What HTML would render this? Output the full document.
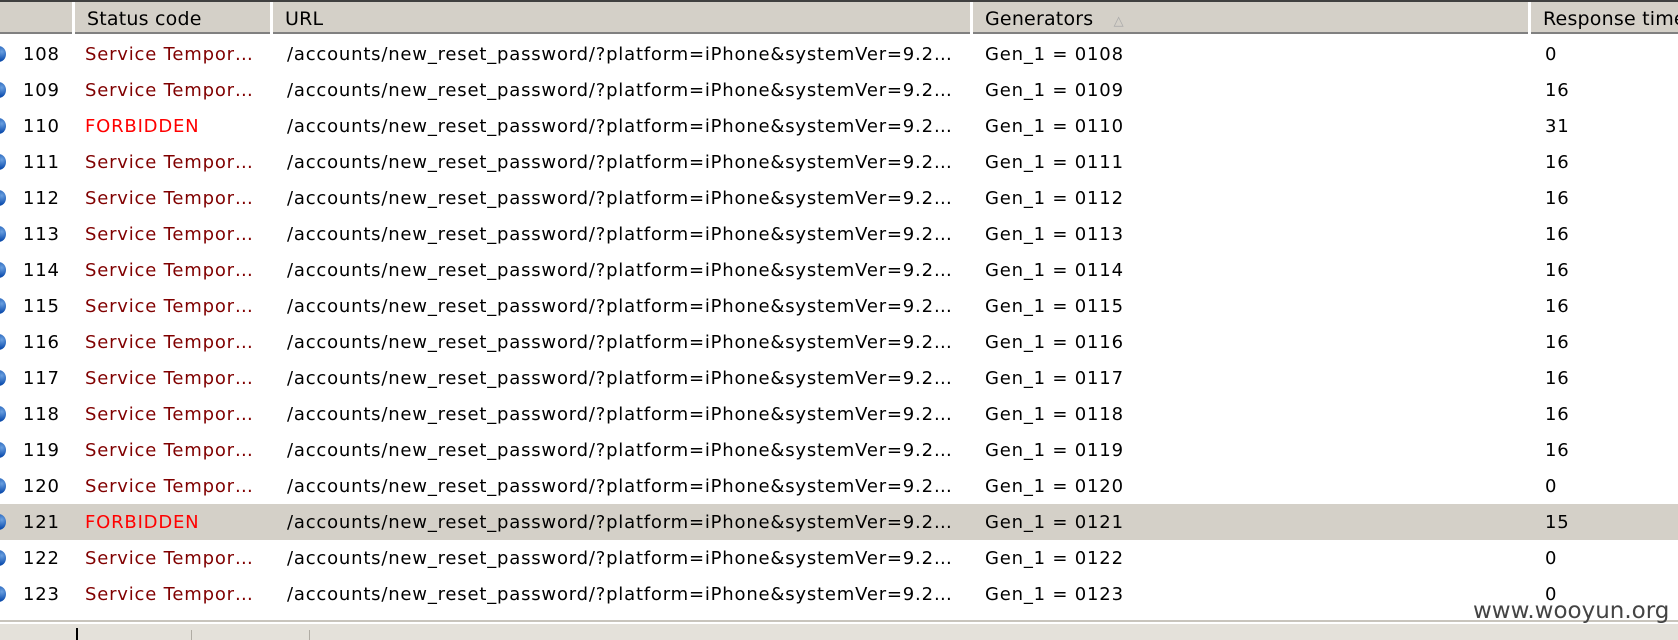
<!DOCTYPE html>
<html><head><meta charset="utf-8"><style>
body{margin:0;width:1678px;height:640px;overflow:hidden;background:#fff;font-family:"DejaVu Sans",sans-serif;font-size:18px;letter-spacing:0.8px;position:relative}
.hdr{position:absolute;top:0;left:0;width:1678px;height:34px;background:#d4d0c8;border-top:2px solid #404040;box-sizing:border-box;border-bottom:2px solid #808080}
.hc{position:absolute;top:0;height:32px;border-left:3px solid #fff;box-sizing:border-box;line-height:34px;padding-left:12px;color:#000;font-size:19px;letter-spacing:0.2px}
.row{position:absolute;left:0;width:1678px;height:36px;line-height:37px}
.row span{position:absolute;white-space:nowrap}
.ic{position:absolute;left:-8px;top:10px;width:14px;height:16px;border-radius:50%;background:radial-gradient(circle at 70% 35%,#6aa0e0,#1050b0 60%,#0a3a80)}
.sel{background:#d4d0c8}
.r{color:#800000}.f{color:#ff0000}
</style></head><body>
<div class="hdr">
<div class="hc" style="left:72px;width:198px">Status code</div>
<div class="hc" style="left:270px;width:700px">URL</div>
<div class="hc" style="left:970px;width:558px">Generators <span style="color:#a8a8a8;font-size:13px;margin-left:14px">△</span></div>
<div class="hc" style="left:1528px;width:160px">Response time</div>
</div>
<div id="rows"></div>
<div style="position:absolute;left:0;top:620px;width:1678px;height:2px;background:#c8c4bc"></div>
<div style="position:absolute;left:0;top:624px;width:1678px;height:16px;background:#e4e1da"></div>
<div style="position:absolute;left:76px;top:628px;width:2px;height:12px;background:#000"></div>
<div style="position:absolute;left:191px;top:630px;width:1px;height:10px;background:#b0aca4"></div>
<div style="position:absolute;left:309px;top:630px;width:1px;height:10px;background:#b0aca4"></div>
<div style="position:absolute;left:1473px;top:598px;font-family:'DejaVu Sans',sans-serif;font-size:23px;letter-spacing:0;color:#444">www.wooyun.org</div>
<script>
var h='';for(var i=0;i<16;i++){var n=108+i;var t=[0,16,31,16,16,16,16,16,16,16,16,16,0,15,0,0][i];var fb=(n==110||n==121);
h+='<div class="row'+(n==121?' sel':'')+'" style="top:'+(36+i*36)+'px"><div class="ic"></div><span style="left:23px">'+n+'</span><span class="'+(fb?'f':'r')+'" style="left:85px">'+(fb?'FORBIDDEN':'Service Tempor…')+'</span><span style="left:287px">/accounts/new_reset_password/?platform=iPhone&amp;systemVer=9.2…</span><span style="left:985px">Gen_1 = 0'+n+'</span><span style="left:1545px">'+t+'</span></div>';}
document.getElementById('rows').innerHTML=h;
</script>
</body></html>
